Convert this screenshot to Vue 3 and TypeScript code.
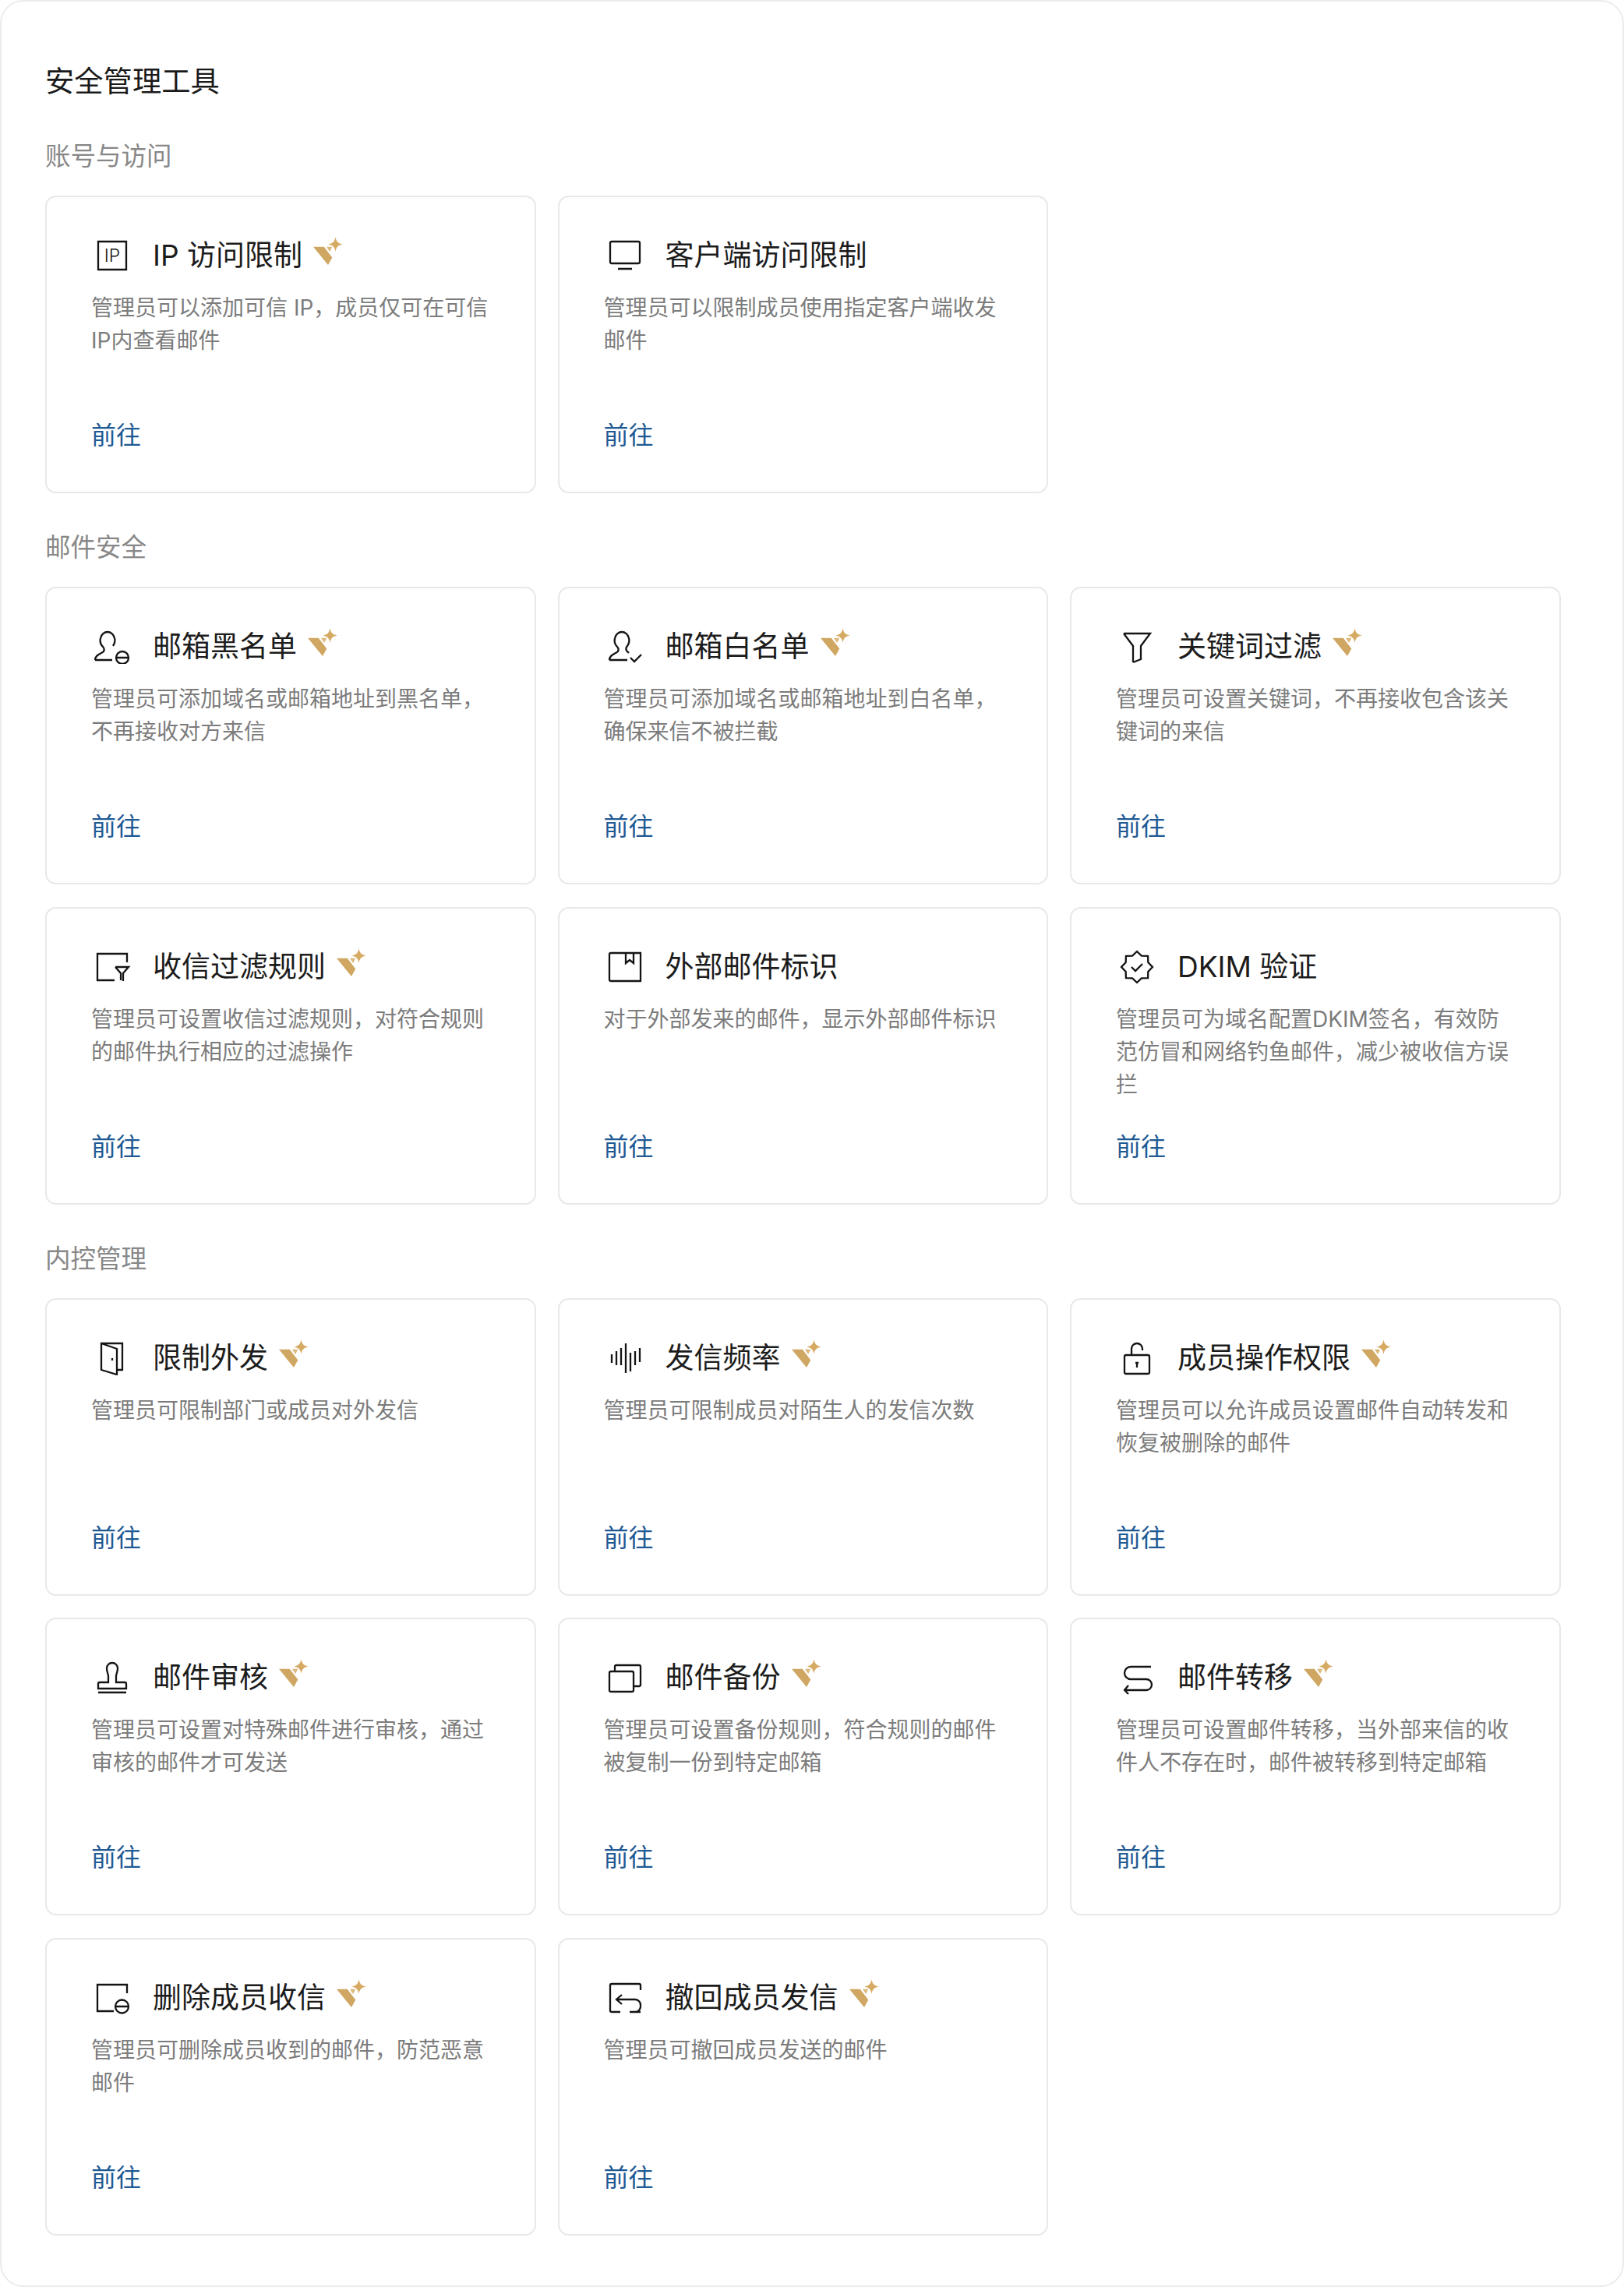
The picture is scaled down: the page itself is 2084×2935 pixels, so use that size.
<script setup lang="ts">
interface Tool {
  title: string;
  desc: string;
  icon: string;
  vip?: boolean;
}

interface Section {
  name: string;
  tools: Tool[];
}

// icon strokes, all drawn on a 56x44 box
const icons: Record<string, string> = {
  ip: 'M10 4h36v36H10z',
  client: 'M11 4h34a2 2 0 0 1 2 2v24a2 2 0 0 1-2 2H11a2 2 0 0 1-2-2V6a2 2 0 0 1 2-2zM19 39h18',
  black:
    'M6 39c0-7 8-8 11-11 1-2 1-4-1-6-3-3-4-7-3-11 1-5 5-8 9-8s8 3 9 8c1 3 0 7-2 10M6 39h22M49 36a8 8 0 1 1-16 0 8 8 0 0 1 16 0zM33 36h16',
  white:
    'M8 39c0-7 8-8 11-11 1-2 1-4-1-6-3-3-4-7-3-11 1-5 5-8 9-8s8 3 9 8c1 3 0 7-2 10-2 2-2 4-1 6l3 3M8 39h23M35 36l5 5 9-9',
  filter: 'M11 5h34L33 21v17l-10 4M23 42V21L11 5',
  inbox: 'M47 16V5H9v34h22M32 22h17l-7 8v10M39 39v-9l-7-8',
  external: 'M10 4h38v36H10a2 2 0 0 1-2-2V6a2 2 0 0 1 2-2zM29 4v13l5-4 5 4V4',
  dkim:
    'M28 2l5.900 5.700 8.200.2.2 8.200L48 22l-5.700 5.900-.2 8.200-8.200.2L28 42l-5.900-5.700-8.200-.2-.2-8.200L8 22l5.700-5.900.2-8.200 8.200-.2zM21 22l5 5 9-9',
  door: 'M14 3h27v34h-7M14 3v34l20 6V10L14 3zM28 22v3',
  rate: 'M11 17v11M17 13v18M23 9v22M29 3v38M35 15v24M41 13v18M47 9v18',
  lock: 'M14 18h28a2 2 0 0 1 2 2v20a2 2 0 0 1-2 2H14a2 2 0 0 1-2-2V20a2 2 0 0 1 2-2zM21 18v-8a7 7 0 0 1 14 0v2M28 27v7M26 28h4',
  stamp:
    'M23 28v-8c0-3-2-5-2-10a7 7 0 0 1 14 0c0 5-2 7-2 10v8h11a2 2 0 0 1 2 2v6H10v-6a2 2 0 0 1 2-2h11zM10 41h36',
  backup: 'M10 14h27a2 2 0 0 1 2 2v22a2 2 0 0 1-2 2H10a2 2 0 0 1-2-2V16a2 2 0 0 1 2-2zM15 14V8a2 2 0 0 1 2-2h29a2 2 0 0 1 2 2v23a2 2 0 0 1-2 2h-7',
  transfer: 'M46 8H20a8 8 0 0 0 0 16h20a7 7 0 0 1 0 14H12M17 32l-5 6 5 5',
  remove: 'M47 16V5H9v34h21M49 33a8.500 8.500 0 1 1-17 0 8.500 8.500 0 0 1 17 0zM32 33h17',
  recall: 'M22 40H11a2 2 0 0 1-2-2V6a2 2 0 0 1 2-2h35a2 2 0 0 1 2 2v6M48 40H34M24 18l-7 6 7 6M17 24h24a7 7 0 0 1 7 8v1a7 7 0 0 1-7 7',
};

const sections: Section[] = [
  {
    name: '账号与访问',
    tools: [
      { title: 'IP 访问限制', desc: '管理员可以添加可信 IP，成员仅可在可信IP内查看邮件', icon: 'ip', vip: true },
      { title: '客户端访问限制', desc: '管理员可以限制成员使用指定客户端收发邮件', icon: 'client' },
    ],
  },
  {
    name: '邮件安全',
    tools: [
      { title: '邮箱黑名单', desc: '管理员可添加域名或邮箱地址到黑名单，不再接收对方来信', icon: 'black', vip: true },
      { title: '邮箱白名单', desc: '管理员可添加域名或邮箱地址到白名单，确保来信不被拦截', icon: 'white', vip: true },
      { title: '关键词过滤', desc: '管理员可设置关键词，不再接收包含该关键词的来信', icon: 'filter', vip: true },
      { title: '收信过滤规则', desc: '管理员可设置收信过滤规则，对符合规则的邮件执行相应的过滤操作', icon: 'inbox', vip: true },
      { title: '外部邮件标识', desc: '对于外部发来的邮件，显示外部邮件标识', icon: 'external' },
      { title: 'DKIM 验证', desc: '管理员可为域名配置DKIM签名，有效防范仿冒和网络钓鱼邮件，减少被收信方误拦', icon: 'dkim' },
    ],
  },
  {
    name: '内控管理',
    tools: [
      { title: '限制外发', desc: '管理员可限制部门或成员对外发信', icon: 'door', vip: true },
      { title: '发信频率', desc: '管理员可限制成员对陌生人的发信次数', icon: 'rate', vip: true },
      { title: '成员操作权限', desc: '管理员可以允许成员设置邮件自动转发和恢复被删除的邮件', icon: 'lock', vip: true },
      { title: '邮件审核', desc: '管理员可设置对特殊邮件进行审核，通过审核的邮件才可发送', icon: 'stamp', vip: true },
      { title: '邮件备份', desc: '管理员可设置备份规则，符合规则的邮件被复制一份到特定邮箱', icon: 'backup', vip: true },
      { title: '邮件转移', desc: '管理员可设置邮件转移，当外部来信的收件人不存在时，邮件被转移到特定邮箱', icon: 'transfer', vip: true },
      { title: '删除成员收信', desc: '管理员可删除成员收到的邮件，防范恶意邮件', icon: 'remove', vip: true },
      { title: '撤回成员发信', desc: '管理员可撤回成员发送的邮件', icon: 'recall', vip: true },
    ],
  },
];
</script>

<template>
  <div class="panel">
    <h1 class="panel-title">安全管理工具</h1>
    <section v-for="section in sections" :key="section.name" class="section">
      <h2 class="section-name">{{ section.name }}</h2>
      <div class="grid">
        <div v-for="tool in section.tools" :key="tool.title" class="card">
          <div class="card-head">
            <svg class="icon" width="56" height="44" viewBox="0 0 56 44" fill="none" stroke="#141414" stroke-width="2.300">
              <path :d="icons[tool.icon]" />
              <text
                v-if="tool.icon === 'ip'"
                x="28"
                y="30"
                text-anchor="middle"
                class="icon-text"
                fill="#141414"
                stroke="none"
              >IP</text>
            </svg>
            <span class="card-title">{{ tool.title }}</span>
            <svg v-if="tool.vip" class="vip" width="38" height="38" viewBox="0 0 36 36">
              <path d="M0 12h13l10 13-5 9z" fill="#cfa662" />
              <path d="M16 12h7l-3 6z" fill="#dcb97c" />
              <path d="M27 0c.8 5 2.500 8 9 9-6.500 1-8.200 4-9 9-.8-5-2.500-8-9-9 6.500-1 8.200-4 9-9z" fill="#d6aa63" />
            </svg>
          </div>
          <p class="card-desc">{{ tool.desc }}</p>
          <a class="card-link">前往</a>
        </div>
      </div>
    </section>
  </div>
</template>

<style scoped>
.panel {
  box-sizing: border-box;
  width: 2084px;
  height: 2935px;
  padding: 81px 0 0 56px;
  background: #fff;
  border: 2px solid #ececec;
  border-radius: 30px;
  font-family: Inter, "Noto Sans CJK SC", sans-serif;
}
.panel-title {
  margin: 0;
  font-size: 37.300px;
  font-weight: 400;
  line-height: 44px;
  color: #1a1a1a;
}
.section { margin-top: 48px; }
.panel-title + .section { margin-top: 52px; }
.section-name {
  margin: 0 0 28px;
  font-size: 32.500px;
  font-weight: 400;
  line-height: 44px;
  color: #888;
}
.grid {
  display: grid;
  grid-template-columns: repeat(3, 629.500px);
  grid-auto-rows: 382px;
  gap: 28.500px 28px;
}
.card {
  box-sizing: border-box;
  display: flex;
  flex-direction: column;
  padding: 53px 56px 50px 57px;
  border: 2px solid #e8e8e8;
  border-radius: 14px;
}
.card-head {
  display: flex;
  align-items: center;
  height: 44px;
}
.icon { flex: none; margin-left: -1px; margin-right: 24px; }
.icon-text { font-size: 23px; font-weight: 300; }
.card-title {
  font-size: 37px;
  line-height: 44px;
  color: #1c1c1c;
}
.vip { flex: none; margin: -10px 0 0 14px; }
.card-desc {
  margin: 24px 0 0;
  font-size: 28px;
  line-height: 42px;
  color: #7c7c7c;
}
.card-link {
  margin-top: auto;
  font-size: 32px;
  line-height: 44px;
  color: #1f5a94;
}
</style>
